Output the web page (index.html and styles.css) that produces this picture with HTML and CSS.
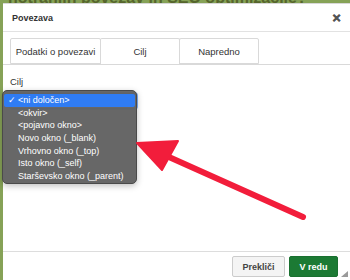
FILE: index.html
```html
<!DOCTYPE html>
<html lang="sl">
<head>
    <meta charset="UTF-8">
    <meta name="viewport" content="width=device-width, initial-scale=1.0">
    <title>Povezava</title>
    <link rel="stylesheet" href="styles.css">
</head>
<body>
    <div class="backdrop-title"><span>notranjih povezav in SEO optimizacije?</span></div>

    <div class="dialog">
        <div class="dialog-header">
            <span class="dialog-title">Povezava</span>
            <span class="dialog-close">✕</span>
        </div>

        <div class="tabs">
            <div class="tab">Podatki o povezavi</div>
            <div class="tab tab-active">Cilj</div>
            <div class="tab">Napredno</div>
        </div>

        <div class="dialog-body">
            <div class="field-label">Cilj</div>
            <div class="select-box"></div>
        </div>

        <div class="dialog-footer">
            <button class="btn btn-cancel">Prekliči</button>
            <button class="btn btn-ok">V redu</button>
            <span class="resize-grip"></span>
        </div>
    </div>

    <!-- odprt seznam izbire -->
    <ul class="dropdown">
        <li class="selected"><span class="check">✓</span>&lt;ni določen&gt;</li>
        <li>&lt;okvir&gt;</li>
        <li>&lt;pojavno okno&gt;</li>
        <li>Novo okno (_blank)</li>
        <li>Vrhovno okno (_top)</li>
        <li>Isto okno (_self)</li>
        <li>Starševsko okno (_parent)</li>
    </ul>

    <svg class="arrow" width="350" height="280" viewBox="0 0 350 280">
        <line x1="303" y1="217" x2="160" y2="153" stroke="#f21d3b" stroke-width="6" stroke-linecap="round"/>
        <polygon points="137,143 178,141 162,170" fill="#f21d3b" stroke="#f21d3b" stroke-width="2" stroke-linejoin="round"/>
    </svg>
</body>
</html>
```

FILE: styles.css
```css
body {
    margin: 0;
    width: 350px;
    height: 280px;
    overflow: hidden;
    position: relative;
    background-color: #86a257;
    font-family: 'Liberation Sans', Arial, Helvetica, sans-serif;
    color: #333333;
}

.backdrop-title {
    height: 3px;
    overflow: hidden;
    display: flex;
    align-items: flex-end;
    padding-left: 8px;
}

.backdrop-title span {
    font-size: 16px;
    line-height: 16px;
    font-weight: bold;
    color: #55652c;
    white-space: nowrap;
    transform: translateY(3px);
}

.dialog {
    margin-left: 3px;
    width: 347px;
    height: 280px;
    background-color: #ffffff;
    border-top: 1px solid #d8d8d8;
    box-sizing: border-box;
    display: flex;
    flex-direction: column;
}

.dialog-header {
    height: 27px;
    display: flex;
    align-items: center;
    justify-content: space-between;
    padding: 0 9px 0 9px;
    border-bottom: 1px solid #e2e2e2;
}

.dialog-title {
    font-size: 9px;
    font-weight: bold;
    color: #333333;
}

.dialog-close {
    font-size: 11px;
    font-weight: bold;
    color: #555555;
    margin-top: 1px;
    -webkit-text-stroke: 0.6px #555555;
}

.tabs {
    display: flex;
    padding: 6px 0 0 7px;
    border-bottom: 1px solid #d9d9d9;
}

.tab {
    height: 25px;
    display: flex;
    align-items: center;
    justify-content: center;
    font-size: 9.5px;
    color: #333333;
    border: 1px solid #d9d9d9;
    border-bottom: none;
    border-radius: 2px 2px 0 0;
    box-sizing: border-box;
    width: 80px;
    margin-left: -1px;
    margin-bottom: -1px;
    background-color: #ffffff;
}

.tab:first-child {
    width: 91px;
    margin-left: 0;
    height: 26px;
    margin-bottom: 0;
    border-bottom: 1px solid #d9d9d9;
}

.tab:last-child {
    height: 26px;
    margin-bottom: 0;
    border-bottom: 1px solid #d9d9d9;
}

.tab-active {
    height: 26px;
    position: relative;
}

.dialog-body {
    flex: 1;
    padding: 11px 7px 0 7px;
}

.field-label {
    font-size: 9.5px;
    color: #333333;
    margin-bottom: 6px;
}

.select-box {
    width: 127px;
    height: 16px;
    box-sizing: border-box;
    border: 1px solid #3b86f0;
    border-radius: 3px;
    box-shadow: 0 0 0 1px #7fb0f6;
}

.dialog-footer {
    height: 32px;
    box-sizing: border-box;
    border-top: 1px solid #dddddd;
    display: flex;
    justify-content: flex-end;
    align-items: flex-start;
    gap: 4px;
    padding: 4px 12px 0 0;
    position: relative;
}

.btn {
    height: 21px;
    font-family: inherit;
    font-size: 9px;
    font-weight: bold;
    border-radius: 2px;
    box-sizing: border-box;
    padding: 0;
}

.btn-cancel {
    width: 53px;
    background-color: #f4f4f4;
    border: 1px solid #cccccc;
    color: #444444;
}

.btn-ok {
    width: 49px;
    background-color: #1c7a34;
    border: 1px solid #1a7030;
    color: #ffffff;
}

.resize-grip {
    position: absolute;
    right: 2px;
    top: 19px;
    width: 0;
    height: 0;
    border-left: 7px solid transparent;
    border-bottom: 6px solid #9a9a9a;
}

.dropdown {
    position: absolute;
    left: 2px;
    top: 90px;
    width: 135px;
    height: 94px;
    margin: 0;
    padding: 3px 0 0 0;
    list-style: none;
    box-sizing: border-box;
    background-color: rgba(98, 98, 98, 0.97);
    border: 1px solid #4a4a4a;
    border-radius: 5px;
    box-shadow: 0 2px 6px rgba(0, 0, 0, 0.25);
}

.dropdown li {
    height: 12.7px;
    line-height: 12.7px;
    font-size: 9px;
    color: #ffffff;
    padding-left: 15px;
    position: relative;
    white-space: nowrap;
}

.dropdown li.selected {
    background-color: #2f7cf4;
    margin: 0 1px;
    padding-left: 14px;
    border-radius: 2px;
}

.check {
    position: absolute;
    left: 4px;
    top: 0;
    font-size: 9px;
}

.arrow {
    position: absolute;
    left: 0;
    top: 0;
    pointer-events: none;
}
```
